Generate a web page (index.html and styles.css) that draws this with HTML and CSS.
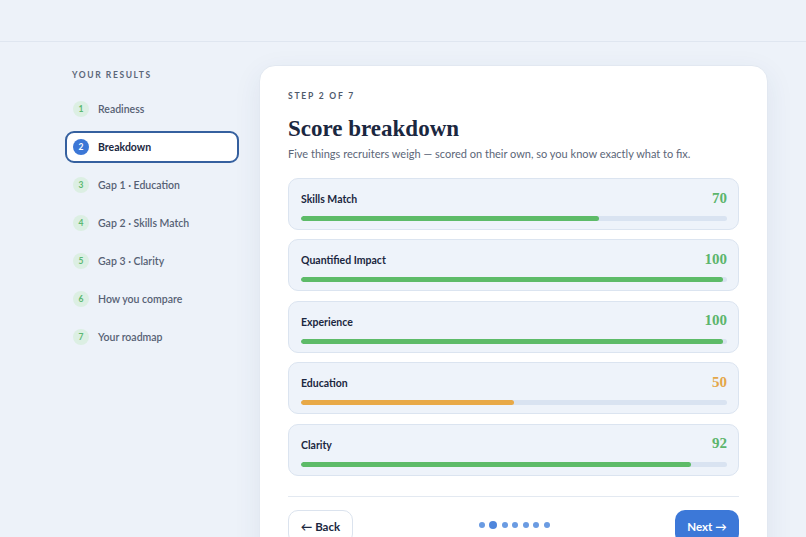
FILE: index.html
```html
<!DOCTYPE html>
<html lang="en">
<head>
  <meta charset="UTF-8" />
  <meta name="viewport" content="width=device-width, initial-scale=1.0" />
  <title>Your Results - Score breakdown</title>
  <link rel="stylesheet" href="styles.css">
</head>
<body>
  <header class="topbar"></header>

  <main class="layout">
    <nav class="sidebar">
      <p class="sidebar-title">Your results</p>
      <ul class="steps">
        <li class="step"><span class="step-num">1</span>Readiness</li>
        <li class="step active"><span class="step-num">2</span>Breakdown</li>
        <li class="step"><span class="step-num">3</span>Gap 1 · Education</li>
        <li class="step"><span class="step-num">4</span>Gap 2 · Skills Match</li>
        <li class="step"><span class="step-num">5</span>Gap 3 · Clarity</li>
        <li class="step"><span class="step-num">6</span>How you compare</li>
        <li class="step"><span class="step-num">7</span>Your roadmap</li>
      </ul>
    </nav>

    <section class="card">
      <p class="eyebrow">Step 2 of 7</p>
      <h1>Score breakdown</h1>
      <p class="lead">Five things recruiters weigh — scored on their own, so you know exactly what to fix.</p>

      <div class="scores">
        <div class="score">
          <div class="score-head">
            <span class="score-label">Skills Match</span>
            <span class="score-value good">70</span>
          </div>
          <div class="track"><div class="fill good" style="width: 70%"></div></div>
        </div>
        <div class="score">
          <div class="score-head">
            <span class="score-label">Quantified Impact</span>
            <span class="score-value good">100</span>
          </div>
          <div class="track"><div class="fill good" style="width: 99%"></div></div>
        </div>
        <div class="score">
          <div class="score-head">
            <span class="score-label">Experience</span>
            <span class="score-value good">100</span>
          </div>
          <div class="track"><div class="fill good" style="width: 99%"></div></div>
        </div>
        <div class="score">
          <div class="score-head">
            <span class="score-label">Education</span>
            <span class="score-value warn">50</span>
          </div>
          <div class="track"><div class="fill warn" style="width: 50%"></div></div>
        </div>
        <div class="score">
          <div class="score-head">
            <span class="score-label">Clarity</span>
            <span class="score-value good">92</span>
          </div>
          <div class="track"><div class="fill good" style="width: 91.5%"></div></div>
        </div>
      </div>

      <div class="card-foot">
        <button class="btn btn-back">← Back</button>
        <div class="dots">
          <span class="dot"></span>
          <span class="dot current"></span>
          <span class="dot"></span>
          <span class="dot"></span>
          <span class="dot"></span>
          <span class="dot"></span>
          <span class="dot"></span>
        </div>
        <button class="btn btn-next">Next →</button>
      </div>
    </section>
  </main>
</body>
</html>
```

FILE: styles.css
```css
body {
  font-family: Lato, "Noto Sans", sans-serif;
  background-color: #edf2f9;
  color: #1b2740;
  margin: 0;
  padding: 0;
}

.topbar {
  height: 41px;
  border-bottom: 1px solid #dfe6f0;
}

.layout {
  display: flex;
  align-items: flex-start;
  gap: 20px;
  padding: 24px 0 0 65px;
}

.sidebar {
  width: 174px;
  flex-shrink: 0;
}

.sidebar-title {
  margin: 3px 0 12px 7px;
  font-size: 8.5px;
  line-height: 12px;
  font-weight: 700;
  letter-spacing: 1.6px;
  text-transform: uppercase;
  color: #5b6678;
}

.steps {
  list-style: none;
  margin: 0;
  padding: 0;
  display: flex;
  flex-direction: column;
  gap: 6px;
}

.step {
  display: flex;
  align-items: center;
  gap: 9px;
  height: 32px;
  box-sizing: border-box;
  padding: 0 6px;
  border: 2px solid transparent;
  border-radius: 9px;
  font-size: 10.5px;
  font-weight: 600;
  color: #566174;
}

.step-num {
  width: 16px;
  height: 16px;
  border-radius: 50%;
  background: #dcefe3;
  color: #5cb872;
  font-size: 8.5px;
  font-weight: 700;
  display: flex;
  align-items: center;
  justify-content: center;
}

.step.active {
  background: #ffffff;
  border-color: #35609f;
  color: #1b2740;
  font-weight: 700;
}

.step.active .step-num {
  background: #3c77d6;
  color: #ffffff;
}

.card {
  width: 509px;
  box-sizing: border-box;
  height: 520px;
  margin-top: -1px;
  padding: 24px 28px 0;
  background: #ffffff;
  border: 1px solid #e2e8f1;
  border-radius: 16px;
  box-shadow: 0 8px 28px rgba(40, 70, 120, 0.08);
}

.eyebrow {
  margin: 0;
  font-size: 8.5px;
  line-height: 12px;
  font-weight: 700;
  letter-spacing: 1.8px;
  text-transform: uppercase;
  color: #4f5a6c;
}

h1 {
  margin: 11px 0 0;
  font-family: "Liberation Serif", "DejaVu Serif", serif;
  font-size: 23px;
  line-height: 32px;
  font-weight: 700;
  color: #1b2740;
}

.lead {
  margin: 1px 0 0;
  font-size: 11px;
  line-height: 16px;
  color: #5b6678;
}

.scores {
  display: flex;
  flex-direction: column;
  gap: 9.4px;
  margin-top: 16px;
}

.score {
  height: 52px;
  box-sizing: border-box;
  padding: 12px 11px 0 12px;
  background: #eef3fa;
  border: 1px solid #dbe4f0;
  border-radius: 10px;
}

.score-head {
  display: flex;
  justify-content: space-between;
  align-items: center;
  height: 16px;
}

.score-label {
  font-size: 10.5px;
  font-weight: 700;
  color: #1b2740;
}

.score-value {
  font-family: "Liberation Serif", "DejaVu Serif", serif;
  font-size: 15px;
  font-weight: 700;
  margin-top: -2px;
}

.score-value.good {
  color: #5cb56c;
}

.score-value.warn {
  color: #e4a648;
}

.track {
  margin-top: 9px;
  height: 5px;
  border-radius: 3px;
  background: #d9e3f1;
  overflow: hidden;
}

.fill {
  height: 100%;
  border-radius: 3px;
}

.fill.good {
  background: #5dbb68;
}

.fill.warn {
  background: #e8a947;
}

.card-foot {
  margin-top: 20px;
  padding-top: 13px;
  border-top: 1px solid #e3e9f1;
  display: flex;
  justify-content: space-between;
  align-items: flex-start;
}

.btn {
  height: 34px;
  padding: 0;
  border-radius: 10px;
  font-family: inherit;
  font-size: 11.5px;
  font-weight: 700;
  white-space: nowrap;
  cursor: pointer;
}

.btn-back {
  width: 65px;
  background: #ffffff;
  color: #1b2740;
  border: 1px solid #dbe3ee;
}

.btn-next {
  width: 64px;
  background: #3c78d8;
  color: #ffffff;
  border: none;
}

.dots {
  display: flex;
  align-items: center;
  gap: 4.5px;
  margin-top: 11px;
}

.dot {
  width: 6px;
  height: 6px;
  border-radius: 50%;
  background: #6a9be2;
}

.dot.current {
  width: 8px;
  height: 8px;
  background: #4f86dc;
}
```
